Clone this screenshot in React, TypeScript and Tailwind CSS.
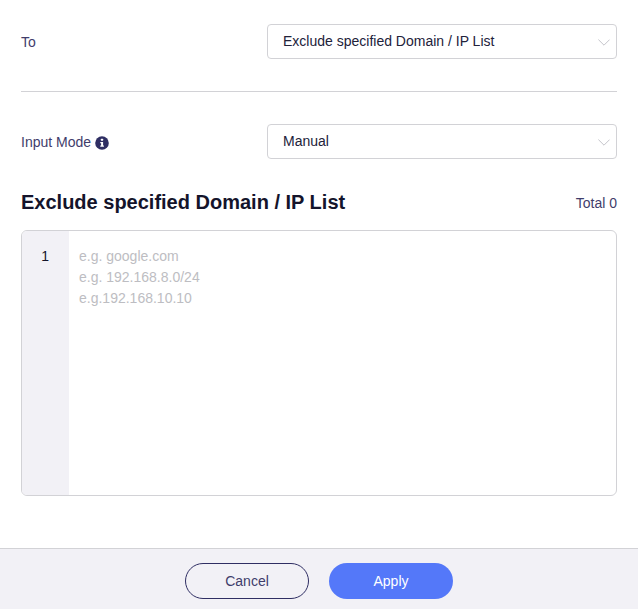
const labelColor = "text-[#3f3d6b]";

const SelectBox = ({ value }: { value: string }) => {
  return (
    <div className="w-[350px] h-[35px] flex items-center justify-between pl-[15px] pr-[6px] bg-white border border-[#d2d2d6] rounded-[4px]">
      <span className="text-[14px] text-[#22223a]">{value}</span>
      <svg width="12" height="7" viewBox="0 0 12 7" fill="none" className="mt-[1px]">
        <path d="M0.4 0.6L6 6.2L11.6 0.6" stroke="#c4c4ca" strokeWidth="1" />
      </svg>
    </div>
  );
};

const InfoIcon = () => {
  return (
    <svg width="14" height="14" viewBox="0 0 14 14">
      <circle cx="7" cy="7" r="6.8" fill="#2f2e63" />
      <rect x="5.9" y="2.7" width="2.2" height="2" rx="0.5" fill="#fff" />
      <path d="M5.3 5.9h2.8v3.6h0.8v1.3H5.3V9.5h0.8V7.2h-0.8z" fill="#fff" />
    </svg>
  );
};

export default function App() {
  return (
    <div className="w-[638px] h-[609px] flex flex-col bg-white font-['Liberation_Sans',Arial,sans-serif]">
      <div className="flex-1 px-[21px] pt-[24px]">
        {/* To */}
        <div className="flex items-center justify-between">
          <span className={`pt-[2px] text-[14px] ${labelColor}`}>To</span>
          <SelectBox value="Exclude specified Domain / IP List" />
        </div>

        <div className="mt-[32px] border-t border-[#d2d2d6]" />

        {/* Input Mode */}
        <div className="mt-[32px] flex items-center justify-between">
          <div className="pt-[2px] flex items-center gap-[4px]">
            <span className={`text-[14px] ${labelColor}`}>Input Mode</span>
            <InfoIcon />
          </div>
          <SelectBox value="Manual" />
        </div>

        {/* List header */}
        <div className="mt-[29px] h-[28px] flex items-center justify-between">
          <h2 className="text-[20px] font-bold text-[#14142b]">
            Exclude specified Domain / IP List
          </h2>
          <span className={`pt-[2px] text-[14px] ${labelColor}`}>Total 0</span>
        </div>

        {/* Editor */}
        <div className="mt-[14px] h-[266px] flex border border-[#d2d2d6] rounded-[6px] overflow-hidden">
          <div className="w-[47px] bg-[#f2f1f6] pt-[15px] pr-[20px] text-right text-[14px] leading-[21px] text-[#14142b]">
            1
          </div>
          <div className="flex-1 pl-[10px] pt-[15px] text-[14px] leading-[21px] text-[#bdbdc2]">
            <div>e.g. google.com</div>
            <div>e.g. 192.168.8.0/24</div>
            <div>e.g.192.168.10.10</div>
          </div>
        </div>
      </div>

      {/* Footer */}
      <div className="h-[61px] pt-[4px] flex items-center justify-center gap-[20px] bg-[#f2f1f6] border-t border-[#d2d2d6]">
        <button className="w-[124px] h-[36px] rounded-full border border-[#2f2e63] text-[14px] text-[#3f3d6b]">
          Cancel
        </button>
        <button className="w-[124px] h-[36px] rounded-full bg-[#5478f9] text-[14px] text-white">
          Apply
        </button>
      </div>
    </div>
  );
}
